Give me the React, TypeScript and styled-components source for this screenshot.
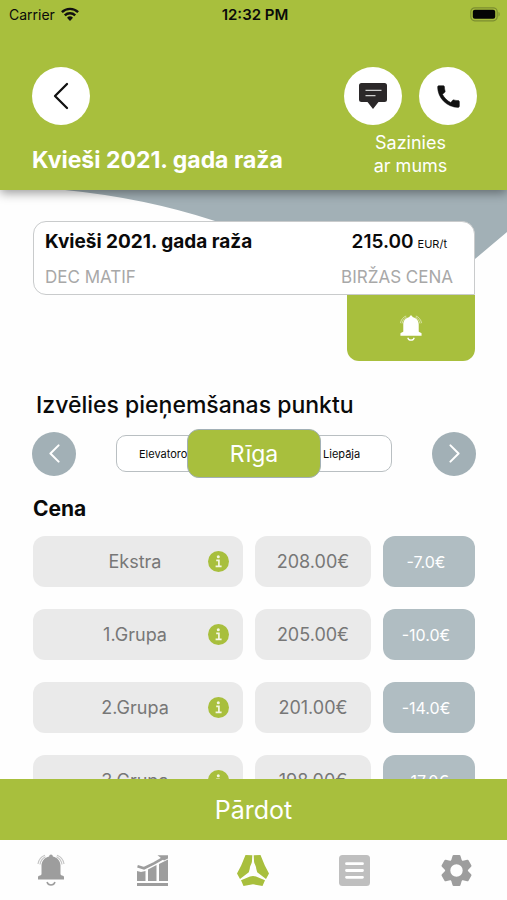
import React from "react";
import styled, { createGlobalStyle } from "styled-components";

const green = "#a8bf3d";
const slate = "#a2b0b6";

const GlobalStyle = createGlobalStyle`
  *, *::before, *::after { box-sizing: border-box; }
  body { margin: 0; background: #fefefe; color: #0a0a0a; font-family: Inter, "Liberation Sans", sans-serif; }
  button { font: inherit; color: inherit; border: 0; padding: 0; background: none; cursor: pointer; }
  h1, h2, h3, p { margin: 0; }
  svg { display: block; flex: none; }
`;

const Screen = styled.div`
  height: 100vh;
  display: flex;
  flex-direction: column;
`;

const Header = styled.header`
  position: relative;
  z-index: 2;
  background: ${green};
  box-shadow: 0 3px 10px rgba(0, 0, 0, 0.4);
`;

const StatusBar = styled.div`
  display: grid;
  grid-template-columns: 1fr auto 1fr;
  align-items: center;
  height: 28px;
  padding: 0 6px 0 9px;
  font-size: 14px;
`;

const Carrier = styled.span`
  display: flex;
  align-items: center;
  gap: 6px;
`;

const Clock = styled.time`
  font-size: 15px;
  font-weight: 600;
`;

const Battery = styled.span`
  justify-self: end;
`;

const HeaderBody = styled.div`
  display: flex;
  justify-content: space-between;
  padding: 39px 30px 13px 32px;
`;

const HeaderStart = styled.div`
  display: flex;
  flex-direction: column;
  justify-content: space-between;
  align-items: flex-start;
  padding-bottom: 2px;
`;

const Title = styled.h1`
  font-size: 23px;
  line-height: 30px;
  font-weight: 700;
  color: #fff;
`;

const Contact = styled.div`
  display: flex;
  flex-direction: column;
  align-items: center;
  gap: 6px;
`;

const ContactButtons = styled.div`
  display: flex;
  gap: 17px;
`;

const ContactLabel = styled.p`
  color: #fff;
  font-size: 18px;
  line-height: 23px;
  text-align: center;
`;

const RoundButton = styled.button<{ $small?: boolean }>`
  display: grid;
  place-items: center;
  width: ${(p) => (p.$small ? 44 : 58)}px;
  height: ${(p) => (p.$small ? 44 : 58)}px;
  border-radius: 50%;
  background: ${(p) => (p.$small ? slate : "#fff")};
  color: ${(p) => (p.$small ? "#fff" : "#111")};
`;

const Content = styled.main`
  position: relative;
  flex: 1;
  min-height: 0;
  overflow: hidden;
  padding: 31px 32px 0 33px;
`;

const Swoosh = styled.svg`
  position: absolute;
  top: 0;
  left: 0;
  width: 100%;
  height: 70px;
`;

const Quote = styled.section`
  position: relative;
  display: flex;
  flex-direction: column;
  align-items: flex-end;
`;

const QuoteCard = styled.div`
  width: 100%;
  display: flex;
  justify-content: space-between;
  height: 74px;
  padding: 8px 21px 0 11px;
  background: #fff;
  border: 1px solid #c9cbcc;
  border-radius: 13px 13px 0 13px;
`;

const QuoteSide = styled.div<{ $end?: boolean }>`
  display: flex;
  flex-direction: column;
  gap: 11px;
  align-items: ${(p) => (p.$end ? "flex-end" : "flex-start")};
`;

const QuoteName = styled.h2`
  font-size: 19px;
  line-height: 24px;
  font-weight: 700;
`;

const Price = styled.p`
  display: flex;
  align-items: baseline;
  gap: 4px;
  height: 24px;
  padding-right: 6px;
  font-size: 19px;
  line-height: 24px;
  font-weight: 600;
`;

const Unit = styled.span`
  font-size: 11px;
  font-weight: 400;
`;

const Muted = styled.p`
  font-size: 17px;
  line-height: 24px;
  color: #a8a8a8;
`;

const AlertButton = styled.button`
  display: grid;
  place-items: center;
  width: 128px;
  height: 66px;
  background: ${green};
  color: #fff;
  border-radius: 0 0 12px 12px;
`;

const SectionTitle = styled.h2`
  padding: 28px 3px 0;
  font-size: 23px;
  line-height: 32px;
  font-weight: 500;
`;

const Picker = styled.div`
  display: flex;
  align-items: center;
  justify-content: space-between;
  margin: 8px -1px 0 -1px;
`;

const PickerTrack = styled.div`
  display: flex;
  align-items: center;
`;

const SideOption = styled.button<{ $end?: boolean }>`
  width: 84px;
  height: 37px;
  background: #fff;
  border: 1px solid #b9bfc2;
  border-radius: 10px;
  font-size: 11px;
  text-align: left;
  white-space: nowrap;
  overflow: hidden;
  margin: ${(p) => (p.$end ? "0 0 0 -13px" : "0 -13px 0 0")};
  padding-left: ${(p) => (p.$end ? 14 : 22)}px;
`;

const ActiveOption = styled.button`
  position: relative;
  width: 134px;
  height: 49px;
  background: ${green};
  border: 1px solid ${slate};
  border-radius: 12px;
  color: #fff;
  font-size: 23px;
`;

const PriceTitle = styled.h3`
  padding-top: 16px;
  font-size: 21px;
  line-height: 30px;
  font-weight: 700;
`;

const PriceTable = styled.table`
  display: block;
  margin-top: 12px;
`;

const PriceBody = styled.tbody`
  display: grid;
  gap: 22px;
`;

const PriceRow = styled.tr`
  display: grid;
  grid-template-columns: 210fr 116fr 92fr;
  gap: 12px;
  height: 51px;
  font-size: 18px;
  color: #777;
`;

const GradeCell = styled.th`
  display: grid;
  grid-template-columns: 44px 1fr 50px;
  align-items: center;
  padding: 0;
  border-radius: 12px;
  background: #eaeaea;
  font-weight: 400;
`;

const GradeName = styled.span`
  grid-column: 2;
`;

const InfoButton = styled.button`
  justify-self: center;
  color: ${green};
`;

const AmountCell = styled.td`
  display: grid;
  place-items: center;
  padding: 0;
  border-radius: 12px;
  background: #eaeaea;
`;

const DeltaCell = styled(AmountCell)`
  padding-right: 6px;
  background: #b0bdc2;
  color: #fff;
  font-size: 16px;
`;

const SellButton = styled.button`
  position: relative;
  flex: none;
  height: 61px;
  background: ${green};
  color: #fff;
  font-size: 25px;
`;

const Nav = styled.nav`
  flex: none;
  display: grid;
  grid-template-columns: repeat(5, 1fr);
  height: 60px;
  background: #fefefe;
`;

const NavButton = styled.button<{ $active?: boolean }>`
  display: grid;
  place-items: center;
  color: ${(p) => (p.$active ? green : "#9d9d9d")};
`;

const Chevron = ({ w, h, right }: { w: number; h: number; right?: boolean }) => (
  <svg width={w} height={h} viewBox="0 0 16 28" fill="none" stroke="currentColor" strokeWidth={w < 14 ? 3 : 2.3} strokeLinecap="round" strokeLinejoin="round">
    <path d={right ? "M2 2 14 14 2 26" : "M14 2 2 14 14 26"} />
  </svg>
);

const Bell = ({ size }: { size: number }) => (
  <svg width={size} height={size} viewBox="0 0 28 32" fill="currentColor">
    <path d="M14 .5c1 0 1.800.8 1.900 1.900 4.500 1 7.600 4.400 7.600 9.200v8.400c0 .8.600 1.300 2.500 1.700.6.200 1 .6 1 1.200v2.600H1v-2.600c0-.6.4-1 1-1.200 1.900-.4 2.500-.9 2.500-1.700v-8.400c0-4.800 3.100-8.200 7.600-9.200C12.200 1.300 13 .5 14 .5z" />
    <path d="M10 28c.6 2 2 3 4 3s3.400-1 4-3" fill="none" stroke="currentColor" strokeWidth="1.500" />
    <path d="M1 10C1.500 6 4.500 2.500 8 1.200M3 10.500C3.500 7.200 5.600 4.300 8.500 2.800M27 10C26.500 6 23.500 2.500 20 1.200M25 10.500c-.5-3.300-2.600-6.200-5.500-7.700" fill="none" stroke="currentColor" strokeWidth="1.100" opacity=".6" />
  </svg>
);

const WifiIcon = () => (
  <svg width="18" height="14" viewBox="0 0 18 14" fill="none" stroke="#111" strokeWidth="2.400">
    <path d="M.9 5.200a11.500 11.500 0 0 1 16.200 0M3.800 8.400a7.400 7.400 0 0 1 10.400 0" />
    <path d="M9 14 6 10.800a4.300 4.300 0 0 1 6 0z" fill="#111" stroke="none" />
  </svg>
);

const BatteryIcon = () => (
  <svg width="31" height="15" viewBox="0 0 31 15">
    <rect x=".8" y=".8" width="26.400" height="13" rx="4" fill="none" stroke="#7c8e30" strokeWidth="1.200" />
    <rect x="2.800" y="2.800" width="22.400" height="9" rx="2" fill="#050505" />
    <path d="M28.500 5v4.600c1.600-.5 1.600-4.100 0-4.600z" fill="#7c8e30" />
  </svg>
);

const ChatIcon = () => (
  <svg width="28" height="26" viewBox="0 0 28 26">
    <path d="M2.500 0h23A2.500 2.500 0 0 1 28 2.500v14a2.500 2.500 0 0 1-2.500 2.500h-6L14 26l-5.500-7h-6A2.500 2.500 0 0 1 0 16.500v-14A2.500 2.500 0 0 1 2.500 0z" fill="#2b2829" />
    <path d="M6.500 7.300h16M6.500 12.700h10" stroke="#cfcfcf" strokeWidth="1.300" />
  </svg>
);

const PhoneIcon = () => (
  <svg width="29" height="29" viewBox="0 0 24 24" fill="#111" stroke="#111" strokeWidth=".4">
    <path d="M20.010 15.380c-1.230 0-2.420-.2-3.530-.56a.977.977 0 0 0-1.010.24l-1.570 1.970c-2.830-1.350-5.480-3.900-6.890-6.830l1.950-1.660c.27-.28.35-.67.24-1.020-.37-1.110-.56-2.300-.56-3.530 0-.54-.45-.99-.99-.99H4.190C3.650 3 3 3.240 3 3.990 3 13.280 10.730 21 20.010 21c.71 0 .99-.63.99-1.180v-3.450c0-.54-.45-.99-.99-.99z" />
  </svg>
);

const InfoIcon = () => (
  <svg width="21" height="21" viewBox="0 0 21 21">
    <circle cx="10.500" cy="10.500" r="10.500" fill="currentColor" />
    <circle cx="10.300" cy="5.700" r="1.500" fill="#f4f7e4" />
    <path d="M8.200 9.300h2.700v6M7.600 15.300h6" fill="none" stroke="#f4f7e4" strokeWidth="1.700" />
  </svg>
);

const ChartIcon = () => (
  <svg width="31" height="31" viewBox="0 0 31 31" fill="currentColor">
    <path d="M0 28h31v3H0zM0 16l4 1 4.500-1V26H0zM11 14.500l8.500-4.500V26H11zM22 9l9-4.500V26h-9z" />
    <path d="M.5 11.300 7 13.200 17 8.400 27.500 2.400" fill="none" stroke="currentColor" strokeWidth="2.700" />
    <path d="M20.500.2H31v3.300l-4 2z" />
  </svg>
);

const LogoIcon = () => (
  <svg width="32" height="31" viewBox="0 0 32 31" fill="currentColor">
    <path d="M8.500 0 15.300.2 14.900 7C14.600 9 12.700 11 12.700 14L11.800 17.300 3 24 0 18.500 4.200 10.500z" />
    <path d="M23.500 0 16.700.2 17.100 7C17.400 9 19.300 11 19.300 14L20.200 17.300 29 24 32 18.500 27.800 10.500z" />
    <path d="M4 25.300 13 21.500q3-1.200 6 0l9 3.800L25.500 31 16 29.300 6.500 31z" />
  </svg>
);

const ListIcon = () => (
  <svg width="31" height="31" viewBox="0 0 31 31">
    <rect width="31" height="31" rx="3.500" fill="#bfbfbf" />
    <path d="M7.500 8.700h16M7.500 15.500h16M7.500 22.300h16" stroke="#fff" strokeWidth="2.800" strokeLinecap="round" />
  </svg>
);

const GearIcon = () => (
  <svg width="31" height="31" viewBox="-15.500 -15.500 31 31" fill="currentColor">
    <circle r="8.800" fill="none" stroke="currentColor" strokeWidth="5.200" />
    {[0, 60, 120, 180, 240, 300].map((angle) => (
      <path key={angle} transform={`rotate(${angle})`} d="M-5.500-9.500-4-14.500q.2-1 1.200-1h5.600q1 0 1.200 1l1.500 5z" />
    ))}
  </svg>
);

const prices = [
  { grade: "Ekstra", amount: "208.00€", delta: "-7.0€" },
  { grade: "1.Grupa", amount: "205.00€", delta: "-10.0€" },
  { grade: "2.Grupa", amount: "201.00€", delta: "-14.0€" },
  { grade: "3.Grupa", amount: "198.00€", delta: "-17.0€" },
];

export default function App() {
  return (
    <Screen>
      <GlobalStyle />
      <Header>
        <StatusBar>
          <Carrier>Carrier <WifiIcon /></Carrier>
          <Clock>12:32 PM</Clock>
          <Battery><BatteryIcon /></Battery>
        </StatusBar>
        <HeaderBody>
          <HeaderStart>
            <RoundButton aria-label="Atpakaļ"><Chevron w={16} h={28} /></RoundButton>
            <Title>Kvieši 2021. gada raža</Title>
          </HeaderStart>
          <Contact>
            <ContactButtons>
              <RoundButton aria-label="Rakstīt"><ChatIcon /></RoundButton>
              <RoundButton aria-label="Zvanīt"><PhoneIcon /></RoundButton>
            </ContactButtons>
            <ContactLabel>Sazinies<br />ar mums</ContactLabel>
          </Contact>
        </HeaderBody>
      </Header>

      <Content>
        <Swoosh viewBox="0 0 507 70" preserveAspectRatio="none" aria-hidden="true">
          <path d="M65 0Q145 8 215 31L300 60 475 69 507 42V0z" fill={slate} />
        </Swoosh>
        <Quote>
          <QuoteCard>
            <QuoteSide>
              <QuoteName>Kvieši 2021. gada raža</QuoteName>
              <Muted>DEC MATIF</Muted>
            </QuoteSide>
            <QuoteSide $end>
              <Price>215.00 <Unit>EUR/t</Unit></Price>
              <Muted>BIRŽAS CENA</Muted>
            </QuoteSide>
          </QuoteCard>
          <AlertButton aria-label="Cenas paziņojums"><Bell size={26} /></AlertButton>
        </Quote>

        <SectionTitle>Izvēlies pieņemšanas punktu</SectionTitle>
        <Picker>
          <RoundButton $small aria-label="Iepriekšējais"><Chevron w={11} h={19} /></RoundButton>
          <PickerTrack>
            <SideOption>Elevatoro</SideOption>
            <ActiveOption>Rīga</ActiveOption>
            <SideOption $end>Liepāja</SideOption>
          </PickerTrack>
          <RoundButton $small aria-label="Nākamais"><Chevron w={11} h={19} right /></RoundButton>
        </Picker>

        <PriceTitle id="prices">Cena</PriceTitle>
        <PriceTable aria-labelledby="prices">
          <PriceBody>
            {prices.map((p) => (
              <PriceRow key={p.grade}>
                <GradeCell scope="row">
                  <GradeName>{p.grade}</GradeName>
                  <InfoButton aria-label={`Par ${p.grade}`}><InfoIcon /></InfoButton>
                </GradeCell>
                <AmountCell>{p.amount}</AmountCell>
                <DeltaCell>{p.delta}</DeltaCell>
              </PriceRow>
            ))}
          </PriceBody>
        </PriceTable>
      </Content>

      <SellButton>Pārdot</SellButton>
      <Nav>
        <NavButton aria-label="Paziņojumi"><Bell size={32} /></NavButton>
        <NavButton aria-label="Statistika"><ChartIcon /></NavButton>
        <NavButton $active aria-label="Sākums"><LogoIcon /></NavButton>
        <NavButton aria-label="Saraksts"><ListIcon /></NavButton>
        <NavButton aria-label="Iestatījumi"><GearIcon /></NavButton>
      </Nav>
    </Screen>
  );
}
